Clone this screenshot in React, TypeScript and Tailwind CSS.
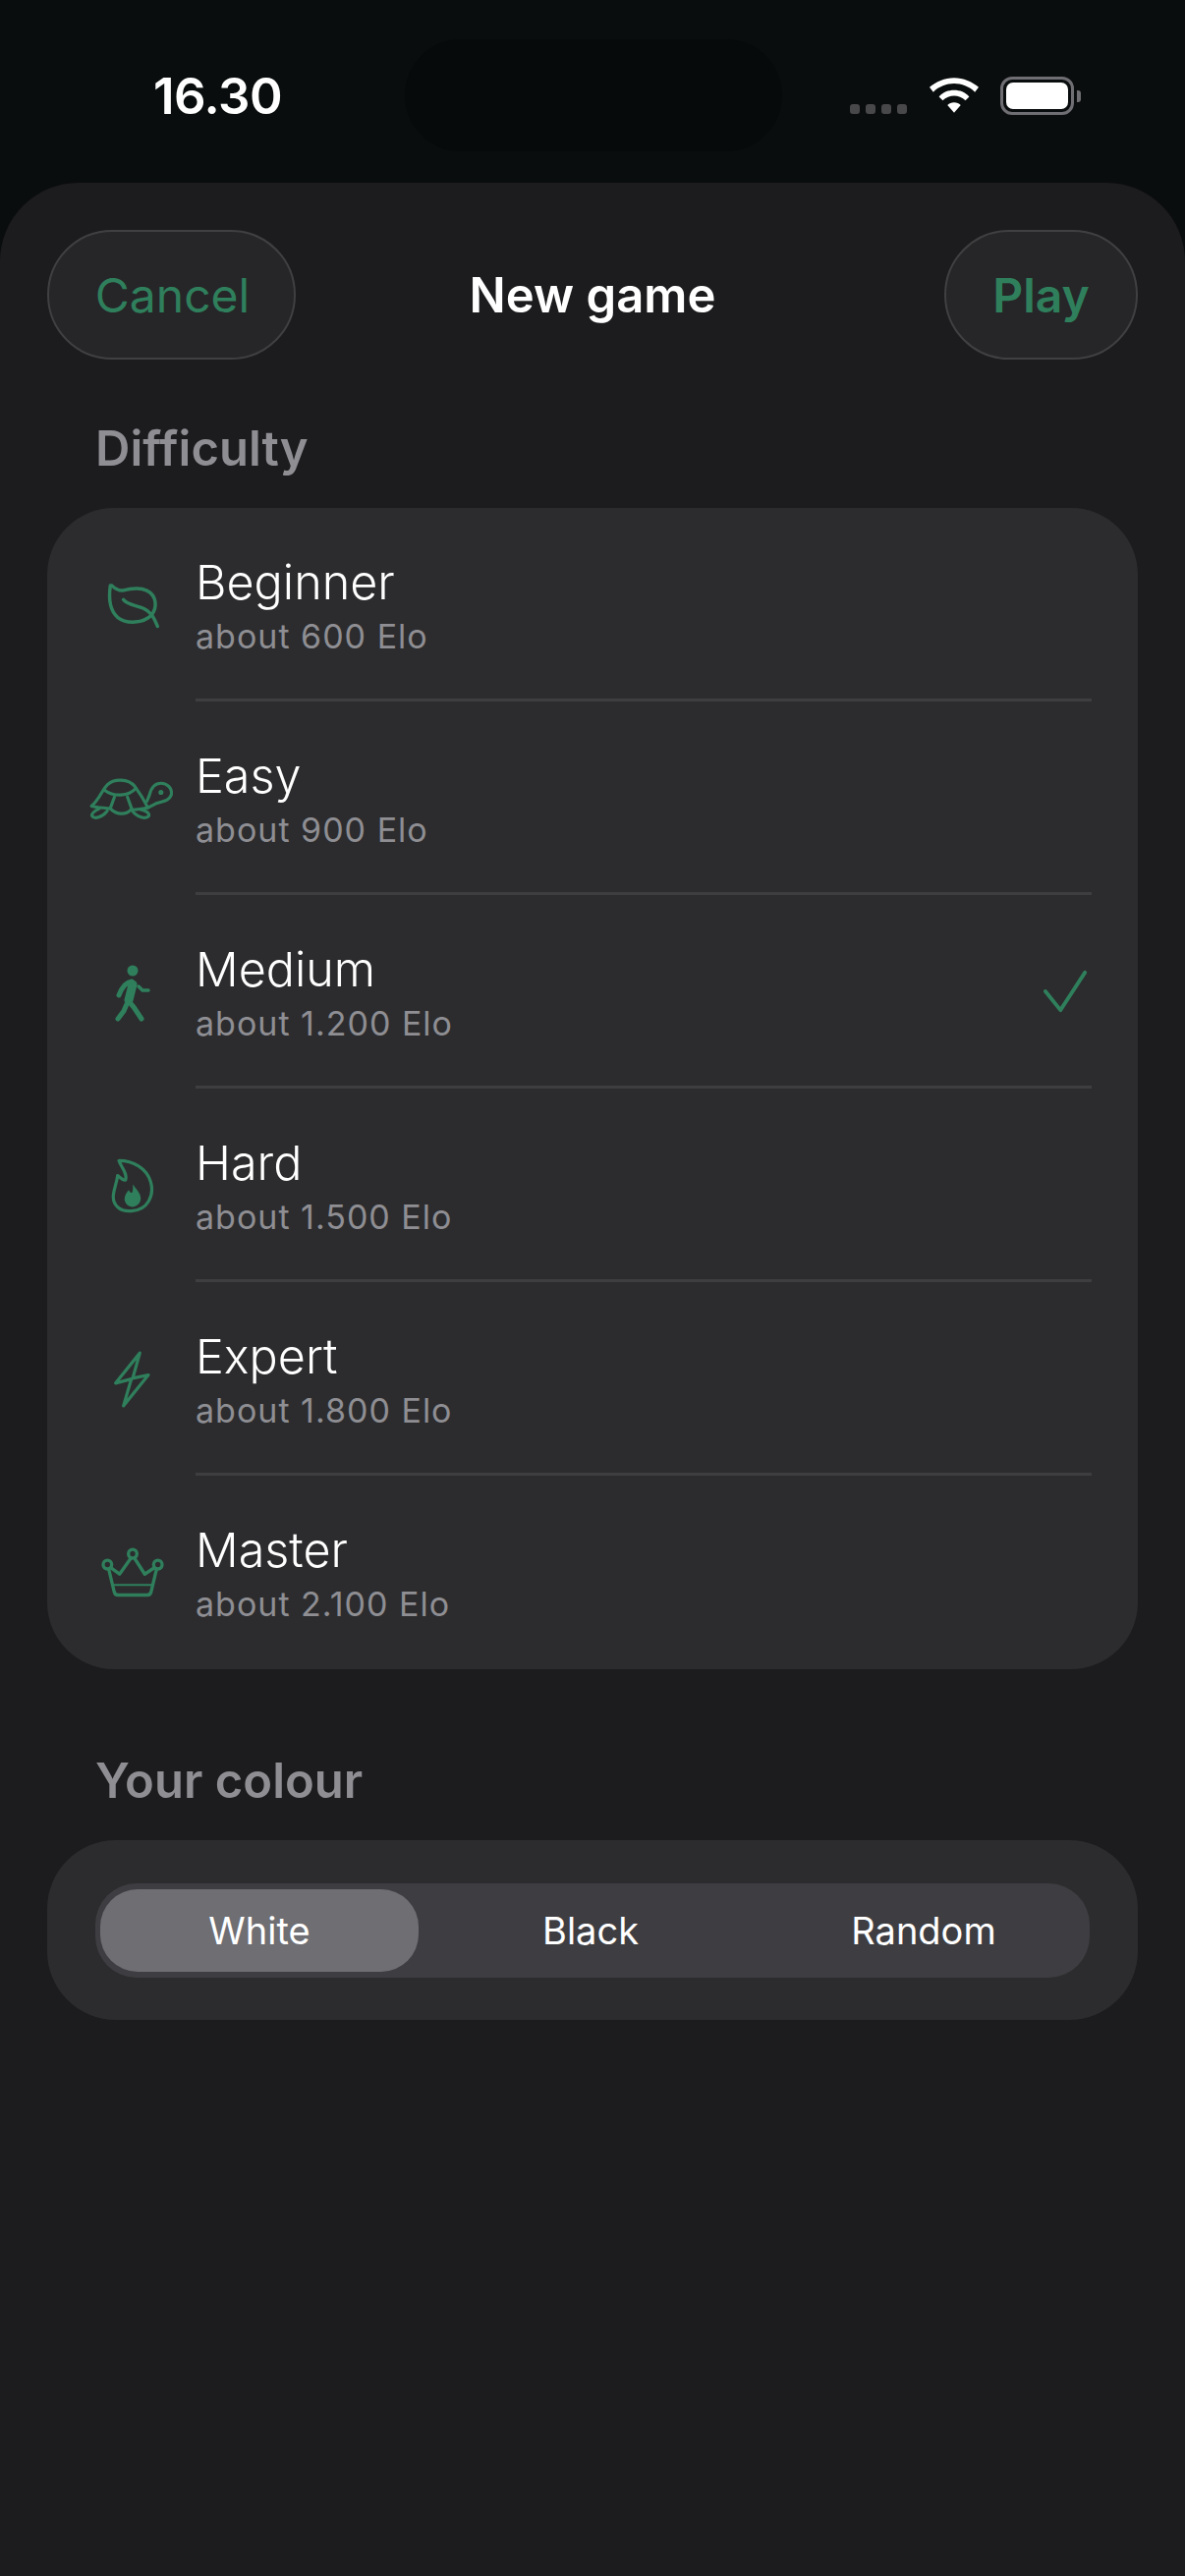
const GREEN = "#2f7f5c";

function Leaf() {
  return (
    <svg width="58" height="50" viewBox="131 210 175 150" fill="none" stroke={GREEN} strokeLinecap="round" strokeLinejoin="round" strokeWidth="10.5">
      <path d="M153 225C148 260 150 300 175 322C205 345 255 340 280 315C298 290 295 255 265 240C240 228 210 235 190 240C175 240 165 232 158 225Z" />
      <path d="M193 268C205 285 235 285 255 295C275 303 285 318 298 350" />
    </svg>
  );
}
function Turtle() {
  return (
    <svg width="90" height="48" viewBox="90 805 270 145" fill="none" stroke={GREEN} strokeLinecap="round" strokeLinejoin="round" strokeWidth="9.5">
      <path d="M102 900C125 880 135 850 150 835C170 815 215 815 235 840C250 860 265 885 275 905" />
      <path d="M140 850C170 872 215 872 238 845" />
      <path d="M172 872L160 905M212 872L225 908" />
      <path d="M102 900C120 905 140 905 160 908C175 925 205 930 222 912C240 910 260 910 275 905L300 892C320 885 340 885 347 865C350 845 335 830 315 830C295 830 285 845 280 865L272 885" />
      <path d="M150 915C135 935 110 942 103 930C100 920 115 913 125 908M225 912C240 935 270 942 278 930C280 920 265 913 250 910" />
      <circle cx="315" cy="858" r="3" fill={GREEN} />
    </svg>
  );
}
function Walk() {
  return (
    <svg width="80" height="80" viewBox="4 8 80 80" fill="none" stroke={GREEN} strokeLinecap="round" strokeLinejoin="round">
      <circle cx="45" cy="26" r="5.5" fill={GREEN} stroke="none" />
      <path d="M45 40L41 56" strokeWidth="9" />
      <path d="M44 37Q36 38 31 51" strokeWidth="5" />
      <path d="M51 42L55 46H61" strokeWidth="3.5" />
      <path d="M40 56L46 63L54 75" strokeWidth="5" />
      <path d="M39 60L36 67L30 75" strokeWidth="5" />
    </svg>
  );
}
function Flame() {
  return (
    <svg width="48" height="60" viewBox="149 165 143 175" preserveAspectRatio="none" fill="none" stroke={GREEN} strokeLinecap="round" strokeLinejoin="round" strokeWidth="9.5">
      <path d="M182 178C225 178 265 200 278 240C290 280 270 325 220 327C185 330 162 310 165 280C167 260 175 245 178 222C185 228 195 238 202 235C208 215 190 200 182 178Z" />
      <path fill={GREEN} stroke="none" d="M225 248C232 262 248 272 248 290C248 305 235 315 222 315C208 315 198 302 199 290C200 278 207 270 212 265C215 272 218 275 222 272C226 265 223 255 225 248Z" />
    </svg>
  );
}
function Bolt() {
  return (
    <svg width="42" height="62" viewBox="160 735 126 180" preserveAspectRatio="none" fill="none" stroke={GREEN} strokeLinejoin="round" strokeLinecap="round" strokeWidth="9.5">
      <path d="M248 747L174 836L222 824L198 903L274 812L226 822Z" />
    </svg>
  );
}
function Crown() {
  return (
    <svg width="70" height="55" viewBox="117 1315 210 160" preserveAspectRatio="none" fill="none" stroke={GREEN} strokeLinecap="round" strokeLinejoin="round" strokeWidth="10">
      <circle cx="225" cy="1340" r="13" />
      <circle cx="148" cy="1372" r="13" />
      <circle cx="302" cy="1372" r="13" />
      <path d="M160 1382L185 1400L218 1355M232 1355L262 1400L290 1382" />
      <path d="M152 1385L168 1450Q170 1462 180 1462H270Q280 1462 282 1450L298 1385" />
      <path d="M165 1432H285" strokeWidth="6" />
    </svg>
  );
}

const levels = [
  { name: "Beginner", elo: "about 600 Elo", icon: <Leaf /> },
  { name: "Easy", elo: "about 900 Elo", icon: <Turtle /> },
  { name: "Medium", elo: "about 1.200 Elo", icon: <Walk />, checked: true },
  { name: "Hard", elo: "about 1.500 Elo", icon: <Flame /> },
  { name: "Expert", elo: "about 1.800 Elo", icon: <Bolt /> },
  { name: "Master", elo: "about 2.100 Elo", icon: <Crown /> },
];

export default function App() {
  return (
    <div className="w-[1206px] h-[2622px] bg-[#0a0d0d] overflow-hidden text-white font-['Inter',sans-serif]">
      <div className="relative h-[186px]">
        <span className="absolute left-[156px] top-[68px] text-[51px] leading-[60px] font-semibold tracking-[-0.5px]">16.30</span>
        <div className="absolute left-[412px] top-[40px] w-[384px] h-[114px] rounded-[57px] bg-[#070a0a]" />
        <div className="absolute left-[865px] top-[78px] h-[39px] flex items-start">
          <div className="flex gap-[6px] mt-[28px]">
            <i className="w-[10px] h-[10px] rounded-[3px] bg-[#48484a]" />
            <i className="w-[10px] h-[10px] rounded-[3px] bg-[#48484a]" />
            <i className="w-[10px] h-[10px] rounded-[3px] bg-[#48484a]" />
            <i className="w-[10px] h-[10px] rounded-[3px] bg-[#48484a]" />
          </div>
          <svg className="ml-[23px] mt-[1px]" width="50" height="37" viewBox="0 0 52 38" fill="#fff">
            <path d="M26 0c10 0 19 4 26 10l-4 5C42 9 34 6 26 6S10 9 4 15L0 10C7 4 16 0 26 0z" />
            <path d="M26 13c6 0 12 2 16 7l-4 4c-3-3-8-5-12-5s-9 2-12 5l-4-4c4-5 10-7 16-7z" />
            <path d="M26 26c3 0 5 1 7 3l-7 8-7-8c2-2 4-3 7-3z" />
          </svg>
          <div className="ml-[22px] flex items-center h-[39px]">
            <div className="w-[75px] h-[39px] rounded-[12px] border-[3px] border-[#6e6e73] p-[3px]">
              <div className="w-full h-full rounded-[7px] bg-white" />
            </div>
            <div className="ml-[3px] w-[4px] h-[12px] rounded-r-[3px] bg-[#6e6e73]" />
          </div>
        </div>
      </div>

      <div className="h-[2436px] rounded-t-[80px] bg-[#1c1c1e] px-[48px] pt-[48px]">
        <div className="relative flex items-center justify-between h-[132px]">
          <button className="w-[253px] h-[132px] pt-[2px] pl-[2px] rounded-[66px] border-2 border-[#404042] bg-[#262628] text-[48px] text-[#2f7f5c]">Cancel</button>
          <span className="absolute left-[0px] right-[0px] top-[37px] text-center text-[49px] leading-[60px] font-semibold pointer-events-none">New game</span>
          <button className="w-[197px] h-[132px] pt-[2px] rounded-[66px] border-2 border-[#404042] bg-[#262628] text-[48px] font-semibold text-[#2f7f5c]">Play</button>
        </div>

        <h2 className="ml-[49px] mt-[59px] text-[49px] leading-[64px] font-semibold text-[#8e8e93]">Difficulty</h2>
        <div className="mt-[28px] rounded-[68px] bg-[#2c2c2e] h-[1182px] overflow-hidden">
          {levels.map((l, i) => (
            <div key={l.name} className="flex h-[197px] items-stretch">
              <div className="w-[172px] mr-[-21px] flex items-center justify-center">
                {l.icon}
              </div>
              <div className="flex-1 relative mr-[47px] pt-[46px]">
                <div className="text-[48.5px] leading-[60px] font-[350]">{l.name}</div>
                <div className="text-[34px] leading-[42px] mt-[4px] text-[#8e8e93] tracking-[1px]">{l.elo}</div>
                {i < 5 && <div className="absolute left-0 right-0 bottom-0 h-[3px] bg-[#3e3e40]" />}
                {l.checked && (
                  <svg className="absolute right-[3px] top-[75px]" width="46" height="46" viewBox="0 0 48 48" fill="none" stroke={GREEN} strokeWidth="4" strokeLinecap="round" strokeLinejoin="round">
                    <path d="M2 24l16 20L44 4" />
                  </svg>
                )}
              </div>
            </div>
          ))}
        </div>

        <h2 className="ml-[49px] mt-[82px] text-[49px] leading-[64px] font-semibold text-[#8e8e93]">Your colour</h2>
        <div className="mt-[28px] rounded-[70px] bg-[#2c2c2e] h-[183px] px-[49px] pt-[1px] flex items-center">
          <div className="w-full h-[96px] rounded-[42px] bg-[#3e3e42] flex items-center pl-[5px] pr-[5px] text-[38px] font-normal">
            <div className="w-[324px] h-[84px] rounded-[38px] bg-[#6e6e73] flex items-center justify-center">White</div>
            <div className="w-[350px] text-center">Black</div>
            <div className="flex-1 text-center">Random</div>
          </div>
        </div>
      </div>
    </div>
  );
}
